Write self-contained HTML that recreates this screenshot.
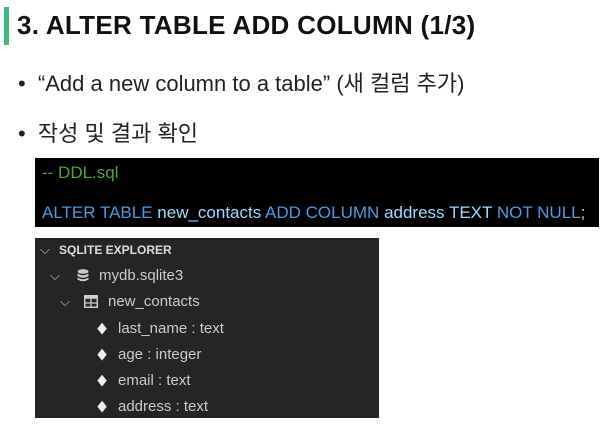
<!DOCTYPE html>
<html><head><meta charset="utf-8"><style>
body{margin:0;width:610px;height:431px;background:#fff;position:relative;overflow:hidden;font-family:"Liberation Sans","Noto Sans CJK KR",sans-serif}
.a{position:absolute;white-space:nowrap}
.bar{left:4px;top:7px;width:5px;height:38px;background:#3dbb7f}
.t{left:17px;top:12px;font-size:26px;line-height:1;font-weight:bold;color:#111;letter-spacing:0.3px}
.b{font-size:22px;color:#222;left:18px}
.code{left:35px;top:158px;width:564px;height:69px;background:#000;font-size:17px}
.ex{left:35px;top:238px;width:344px;height:180px;background:#252526;color:#ccc;font-size:15px}
.ex div{position:absolute;white-space:nowrap}
.k{color:#4a9be0}.i{color:#9cdcfe}
</style></head><body>
<div class="a bar"></div>
<div class="a t">3. ALTER TABLE ADD COLUMN (1/3)</div>
<div class="a b" style="top:66px">•&nbsp; “Add a new column to a table” (새 컬럼 추가)</div>
<div class="a b" style="top:116px">•&nbsp; 작성 및 결과 확인</div>
<div class="a code">
<div class="a" style="left:7px;top:5px;color:#5a9e3c">-- DDL.sql</div>
<div class="a" style="left:7px;top:45px"><span class="k">ALTER TABLE</span> <span class="i">new_contacts</span> <span class="k">ADD COLUMN</span> <span class="i">address TEXT</span> <span class="k">NOT NULL</span><span style="color:#ccc">;</span></div>
</div>
<div class="a ex">
<div style="left:5px;top:4px;font-size:13px">⌵</div>
<div style="left:24px;top:5px;font-weight:bold;font-size:12px;color:#ddd">SQLITE EXPLORER</div>
<div style="left:15px;top:30px;font-size:13px">⌵</div>
<svg style="position:absolute;left:42px;top:31px" width="12" height="13" viewBox="0 0 12 13"><g fill="#ccc"><ellipse cx="6" cy="2.5" rx="5.5" ry="2.3"/><path d="M0.5 4.5q5.5 3.5 11 0v2.5q-5.5 3.5-11 0z"/><path d="M0.5 8.5q5.5 3.5 11 0v2q-5.5 3.5-11 0z"/></g></svg>
<div style="left:64px;top:29px">mydb.sqlite3</div>
<div style="left:25px;top:56px;font-size:13px">⌵</div>
<svg style="position:absolute;left:49px;top:57px" width="14" height="13" viewBox="0 0 14 13"><rect x="0.75" y="0.75" width="12.5" height="11.5" fill="none" stroke="#ccc" stroke-width="1.5"/><rect x="0.75" y="0.75" width="12.5" height="3" fill="#ccc"/><path d="M7 1v11M1 8h12" stroke="#ccc" stroke-width="1.3"/></svg>
<div style="left:73px;top:55px">new_contacts</div>
<div style="left:61px;top:82px;font-size:12px;color:#eee;transform:scaleX(0.8)">◆</div><div style="left:83px;top:82px">last_name : text</div>
<div style="left:61px;top:108px;font-size:12px;color:#eee;transform:scaleX(0.8)">◆</div><div style="left:83px;top:108px">age : integer</div>
<div style="left:61px;top:134px;font-size:12px;color:#eee;transform:scaleX(0.8)">◆</div><div style="left:83px;top:134px">email : text</div>
<div style="left:61px;top:160px;font-size:12px;color:#eee;transform:scaleX(0.8)">◆</div><div style="left:83px;top:160px">address : text</div>
</div>
</body></html>
